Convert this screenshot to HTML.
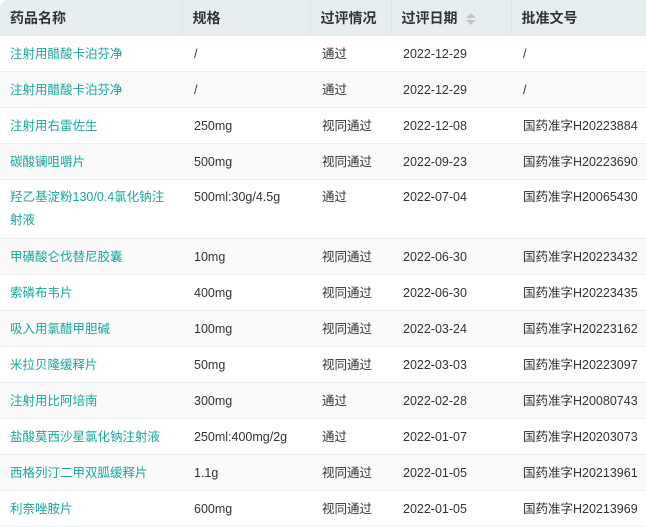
<!DOCTYPE html>
<html><head><meta charset="utf-8"><style>
body{margin:0;width:646px;height:524px;overflow:hidden;background:#fff;font-family:"Liberation Sans","Noto Sans CJK SC",sans-serif;}
table{border-collapse:collapse;table-layout:fixed;width:646px;}
th{background:#e6eef0;height:36px;text-align:left;font-size:14px;font-weight:bold;color:#333;padding:0 0 0 10px;border-right:1px solid #dde7ea;}
th:last-child{border-right:none;}
thead tr th:first-child{border-top-left-radius:8px;}
td{font-size:12.5px;color:#333;padding:0 0 0 12px;height:35px;border-bottom:1px solid #ebeef5;line-height:22px;vertical-align:middle;}
td:first-child{color:#1aa59c;padding-left:10px;padding-right:16px;}
tbody tr:nth-child(even) td{background:#fafafa;}
tr.tall td{height:52px;vertical-align:top;padding-top:6px;line-height:23px;}
.sort{display:inline-block;vertical-align:middle;margin-left:8px;width:10px;height:14px;position:relative;}
.sort:before{content:"";position:absolute;left:0;top:1px;border:5px solid transparent;border-bottom-color:#c0c4cc;border-top:0;}
.sort:after{content:"";position:absolute;left:0;top:8px;border:5px solid transparent;border-top-color:#c0c4cc;border-bottom:0;}
</style></head><body>
<table>
<colgroup><col style="width:182px"><col style="width:128px"><col style="width:81px"><col style="width:120px"><col style="width:135px"></colgroup>
<thead><tr><th>药品名称</th><th>规格</th><th>过评情况</th><th>过评日期<span class="sort"></span></th><th>批准文号</th></tr></thead>
<tbody>
<tr><td>注射用醋酸卡泊芬净</td><td>/</td><td>通过</td><td>2022-12-29</td><td>/</td></tr>
<tr><td>注射用醋酸卡泊芬净</td><td>/</td><td>通过</td><td>2022-12-29</td><td>/</td></tr>
<tr><td>注射用右雷佐生</td><td>250mg</td><td>视同通过</td><td>2022-12-08</td><td>国药准字H20223884</td></tr>
<tr><td>碳酸镧咀嚼片</td><td>500mg</td><td>视同通过</td><td>2022-09-23</td><td>国药准字H20223690</td></tr>
<tr class="tall"><td>羟乙基淀粉130/0.4氯化钠注射液</td><td>500ml:30g/4.5g</td><td>通过</td><td>2022-07-04</td><td>国药准字H20065430</td></tr>
<tr><td>甲磺酸仑伐替尼胶囊</td><td>10mg</td><td>视同通过</td><td>2022-06-30</td><td>国药准字H20223432</td></tr>
<tr><td>索磷布韦片</td><td>400mg</td><td>视同通过</td><td>2022-06-30</td><td>国药准字H20223435</td></tr>
<tr><td>吸入用氯醋甲胆碱</td><td>100mg</td><td>视同通过</td><td>2022-03-24</td><td>国药准字H20223162</td></tr>
<tr><td>米拉贝隆缓释片</td><td>50mg</td><td>视同通过</td><td>2022-03-03</td><td>国药准字H20223097</td></tr>
<tr><td>注射用比阿培南</td><td>300mg</td><td>通过</td><td>2022-02-28</td><td>国药准字H20080743</td></tr>
<tr><td>盐酸莫西沙星氯化钠注射液</td><td>250ml:400mg/2g</td><td>通过</td><td>2022-01-07</td><td>国药准字H20203073</td></tr>
<tr><td>西格列汀二甲双胍缓释片</td><td>1.1g</td><td>视同通过</td><td>2022-01-05</td><td>国药准字H20213961</td></tr>
<tr><td>利奈唑胺片</td><td>600mg</td><td>视同通过</td><td>2022-01-05</td><td>国药准字H20213969</td></tr>
</tbody></table>
</body></html>
